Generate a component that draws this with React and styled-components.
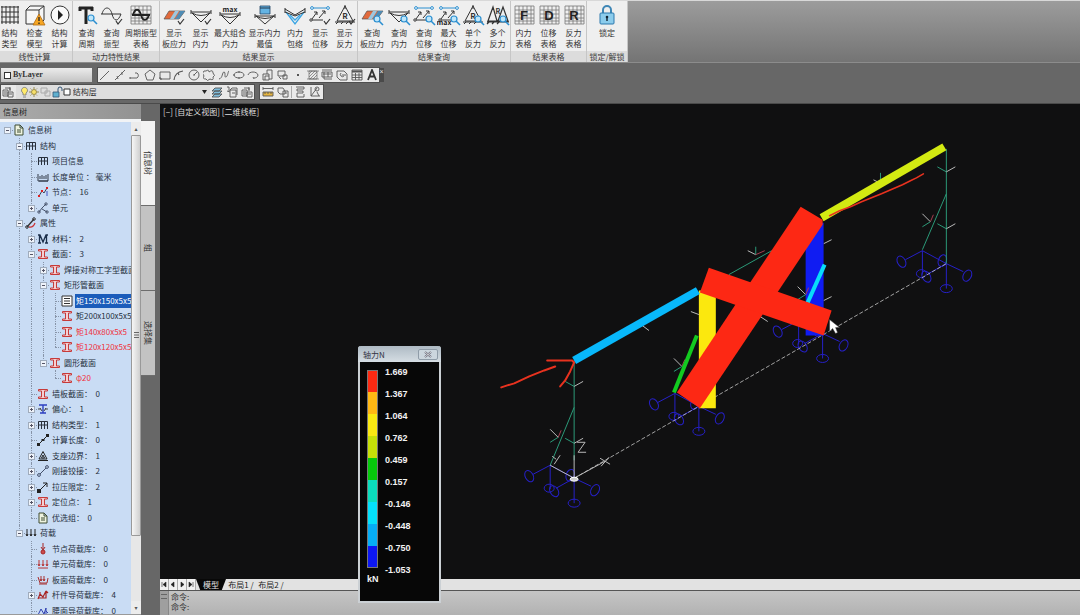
import React from "react";
import styled, { createGlobalStyle, css } from "styled-components";

const GlobalStyle = createGlobalStyle`
  * { box-sizing: border-box; }
  body {
    margin: 0;
    background: #676767;
    color: #333;
    font: 8px/11px "Noto Sans CJK SC", "Liberation Sans", sans-serif;
  }
  button, select { font: inherit; color: inherit; }
  svg { display: block; flex: none; }
`;

/* ---------- shell ---------- */

const Shell = styled.div`
  height: 100vh;
  display: flex;
  flex-direction: column;
  overflow: hidden;
  background: #676767;
`;

const Workspace = styled.main`
  flex: 1;
  min-height: 0;
  display: flex;
`;

/* ---------- ribbon ---------- */

const Ribbon = styled.header`
  flex: none;
  display: flex;
  height: 63px;
  overflow: hidden;
  border-top: 1px solid #d8d8d8;
  border-bottom: 1px solid #8c8c8c;
  background: linear-gradient(#9c9c9c, #747474);
`;

const RibbonGroups = styled.div`
  display: flex;
  margin-left: -3px;
  background: #efefef;
`;

const Group = styled.section`
  display: flex;
  flex-direction: column;
  width: ${(p) => p.$width}px;
  border-right: 1px solid #c6c6c6;
`;

const GroupButtons = styled.div`
  flex: 1;
  display: flex;
  justify-content: ${(p) => (p.$center ? "center" : "flex-start")};
  padding-top: 3px;
`;

const GroupTitle = styled.h2`
  margin: 0;
  height: 11px;
  background: #dcdcdc;
  color: #3a3a3a;
  font-size: 8px;
  font-weight: 400;
  line-height: 11px;
  text-align: center;
  white-space: nowrap;
`;

const RibbonButton = styled.button`
  display: flex;
  flex-direction: column;
  align-items: center;
  gap: 1px;
  flex: none;
  width: ${(p) => p.$width}px;
  padding: 0;
  border: 0;
  background: none;
  white-space: nowrap;
  line-height: 11px;
  text-align: center;
`;

const ButtonText = styled.span`
  display: block;
  line-height: 11px;
`;

const K = "#333";
const B = "#2b8fd0";

const Lens = ({ x = 17, y = 15 }) => (
  <g>
    <path d={`M${x + 2} ${y + 2}l4 4`} stroke={B} strokeWidth="1.6" />
    <circle cx={x} cy={y} r="3" fill="#bfe6fa" stroke={B} strokeWidth="1.2" />
  </g>
);
const Check = () => <path d="M16 17l2 3 4-5" stroke={K} strokeWidth="1.2" />;
const Plate = () => (
  <g>
    <path d="M7 7h16l-6 8H2z" fill="#e26a3c" stroke="#555" strokeWidth=".7" />
    <path d="M13 7h4l-5 8H8z" fill="#9cc7e0" />
    <path d="M18 7h5l-6 8h-4z" fill="#4e8cb5" />
  </g>
);
const Moment = () => (
  <path d="M2 8h20M2 6v4M22 6v4M3 9l9 9 9-9M3 9q9 5 18 0" stroke={K} />
);
const Shift = () => (
  <g>
    <path d="M5 4h14" stroke={B} />
    <circle cx="4" cy="4" r="1.4" fill="#fff" stroke={B} />
    <circle cx="20" cy="4" r="1.4" fill="#fff" stroke={B} />
    <path d="M4 15l5-7M11 14l6-7M6 8h3v3M14 7h3v3M3 16h12" stroke={K} />
    <circle cx="3" cy="16" r="1.2" fill="#fff" stroke={K} />
  </g>
);
const Support = () => (
  <g>
    <path d="M12 2L4 17h16zM12 5v-4M2 18h20M5 18l-2 2M10 18l-2 2M15 18l-2 2" stroke={K} />
    <text x="12" y="15" fontSize="8" fontWeight="700" textAnchor="middle" fill={K}>R</text>
  </g>
);
const LetterGrid = ({ letter }) => (
  <g>
    <path d="M3 2h19v18H3zM7 2v18M11 2v18M15 2v18M19 2v18M3 6h19M3 10h19M3 14h19M3 17h19" stroke="#777" strokeWidth=".8" />
    <text x="12" y="16" fontSize="13" fontWeight="700" textAnchor="middle" fill="#222" fontFamily="Liberation Sans">{letter}</text>
  </g>
);

const ribbonArt = {
  grid: <path d="M4 2v18M8 2v18M12 2v18M16 2v18M20 2v18M3 3h18M3 8h18M3 13h18M3 18h18" stroke={K} />,
  warn: (
    <g>
      <path d="M3 6l4-4h14v14l-4 4H3zM3 6h13v13M16 6l5-4" stroke={K} fill="#f6f6f6" />
      <path d="M16 10l6 11H10z" fill="#f6a623" stroke="#b06a10" strokeWidth=".8" />
      <path d="M16 13v4M16 18.500v1.500" stroke="#222" strokeWidth="1.3" />
    </g>
  ),
  play: (
    <g>
      <circle cx="12" cy="11" r="9" stroke={K} fill="#fafafa" />
      <path d="M10 6l5 5-5 5z" fill="#222" />
    </g>
  ),
  period: (
    <g>
      <path d="M4 4h14M11 4v16M5 3v4M17 3v4" stroke="#222" strokeWidth="3" />
      <Lens x={16} y={14} />
    </g>
  ),
  wave: (
    <g>
      <path d="M1 10h20M2 10c2-8 8-8 10 0s6 8 9 0" stroke={K} />
      <Check />
    </g>
  ),
  waveTable: (
    <g>
      <path d="M2 2h20v18H2zM6 2v18M10 2v18M14 2v18M18 2v18M2 6h20M2 10h20M2 14h20M2 17h20" stroke="#777" strokeWidth=".8" />
      <path d="M4 11c2-7 6-7 8 0s6 6 8 0M3 11h18" stroke="#222" strokeWidth="1.8" />
    </g>
  ),
  plateCheck: <g><Plate /><Check /></g>,
  momentCheck: <g><Moment /><Check /></g>,
  momentMax: (
    <g>
      <path d="M2 8v4M22 8v4M2 10h20M3 11l9 9 9-9M3 11q9 5 18 0" stroke={K} />
      <text x="12" y="8" fontSize="7" fontWeight="700" textAnchor="middle" fill="#222">max</text>
    </g>
  ),
  momentTop: (
    <g>
      <path d="M2 10v4M22 10v4M2 12h20M3 12l9 8 9-8M3 12q9 5 18 0" stroke={K} />
      <path d="M7 2h10v8H7z" fill="#64b4e4" stroke="#246" strokeWidth=".8" />
      <path d="M7 4h10" stroke="#234" />
    </g>
  ),
  envelope: (
    <g>
      <path d="M3 8l9 12 9-12M7 11l5 5 5-5" stroke="#3aa5e4" strokeWidth="1.3" />
      <path d="M2 4v5M22 4v5M2 5l10 6 10-6M2 8l10 4 10-4" stroke={K} />
    </g>
  ),
  shiftCheck: <g><Shift /><Check /></g>,
  supportCheck: <g><Support /><Check /></g>,
  plateFind: <g><Plate /><Lens /></g>,
  momentFind: <g><Moment /><Lens /></g>,
  shiftFind: <g><Shift /><Lens /></g>,
  shiftMax: (
    <g>
      <Shift />
      <text x="7" y="21" fontSize="7" fontWeight="700" textAnchor="middle" fill="#222">max</text>
      <Lens />
    </g>
  ),
  supportFind: <g><Support /><Lens /></g>,
  supportMany: (
    <g>
      <path d="M7 3L2 17h9zM17 3l-5 14h10zM1 18h22M3 18l-2 2M8 18l-2 2M13 18l-2 2" stroke={K} strokeWidth="1.2" />
      <text x="12" y="10" fontSize="7" fontWeight="700" textAnchor="middle" fill={K}>R</text>
      <Lens />
    </g>
  ),
  F: <LetterGrid letter="F" />,
  D: <LetterGrid letter="D" />,
  R: <LetterGrid letter="R" />,
  lock: (
    <g>
      <path d="M8 10V6a4 4 0 0 1 8 0v4" stroke="#3e86b5" strokeWidth="2" />
      <rect x="5" y="9" width="14" height="11" rx="1" fill="#8cccec" stroke="#2d78ad" />
      <path d="M12 13v4" stroke="#123" strokeWidth="1.4" />
      <circle cx="12" cy="13" r="1.300" fill="#123" />
    </g>
  ),
};

const groups = [
  { title: "线性计算", width: 76, items: [[25, "grid", "结构", "类型"], [25, "warn", "检查", "模型"], [25, "play", "结构", "计算"]] },
  { title: "动力特性结果", width: 87, items: [[27, "period", "查询", "周期"], [23, "wave", "查询", "振型"], [36, "waveTable", "周期振型", "表格"]] },
  {
    title: "结果显示", width: 198,
    items: [[28, "plateCheck", "显示", "板应力"], [25, "momentCheck", "显示", "内力"], [34, "momentMax", "最大组合", "内力"], [35, "momentTop", "显示内力", "最值"], [26, "envelope", "内力", "包络"], [24, "shiftCheck", "显示", "位移"], [25, "supportCheck", "显示", "反力"]],
  },
  {
    title: "结果查询", width: 153,
    items: [[28, "plateFind", "查询", "板应力"], [26, "momentFind", "查询", "内力"], [24, "shiftFind", "查询", "位移"], [25, "shiftMax", "最大", "位移"], [24, "supportFind", "单个", "反力"], [25, "supportMany", "多个", "反力"]],
  },
  { title: "结果表格", width: 76, items: [[25, "F", "内力", "表格"], [25, "D", "位移", "表格"], [25, "R", "反力", "表格"]] },
  { title: "锁定/解锁", width: 41, items: [[38, "lock", "锁定"]] },
];

/* ---------- tool bars ---------- */

const ToolArea = styled.div`
  flex: none;
  display: flex;
  flex-direction: column;
  gap: 3px;
  padding: 5px 0 4px 1px;
  border-bottom: 1px solid #4a4a4a;
`;

const ToolRow = styled.div`
  display: flex;
  gap: 6px;
  height: 14px;
`;

const ToolStrip = styled.div`
  display: flex;
  align-items: center;
  width: ${(p) => p.$width}px;
  height: 14px;
  background: #e9e9e9;
  box-shadow: 0 0 0 1px #4f4f4f;
`;

const ToolButton = styled.button`
  flex: 1;
  min-width: 0;
  display: flex;
  justify-content: center;
  padding: 0;
  border: 0;
  background: none;
`;

const StripClose = styled.button`
  flex: none;
  width: 5px;
  height: 14px;
  margin-left: -6px;
  padding: 0;
  border: 0;
  background: #4a4a4a;
  color: #e8e8e8;
  font: 7px/7px "Liberation Sans", sans-serif;
  display: flex;
  align-items: flex-start;
  justify-content: center;
`;

const Picker = styled.div`
  display: flex;
  align-items: center;
  gap: 2px;
  width: ${(p) => p.$width}px;
  padding: 0 3px;
  height: 14px;
  background: ${(p) => (p.$flat ? "#dedede" : "linear-gradient(#ececec, #c4c4c4)")};
`;

const PickerSelect = styled.select`
  flex: 1;
  min-width: 0;
  height: 14px;
  padding: 0;
  border: 0;
  background: none;
  appearance: none;
  line-height: 14px;
  ${(p) => p.$serif && css`font-family: "Liberation Serif", serif; font-weight: 700;`}
`;

const Swatch = styled.span`
  flex: none;
  width: 7px;
  height: 7px;
  border: 1px solid #333;
  background: #fff;
`;

const Separator = styled.span`
  width: 1px;
  height: 12px;
  background: #aaa;
`;

const Tool = ({ children }) => (
  <svg width="12" height="12" viewBox="0 0 12 12" fill="none" stroke="#555" strokeWidth=".9">{children}</svg>
);

const drawTools = [
  ["直线", <path d="M1 11L10 2" />],
  ["构造线", <path d="M1 11L11 1M3 7l1 3M8 3v3" />],
  ["多段线", <path d="M1 9h7a3 3 0 0 0 0-5H6M1 8v2" />],
  ["多边形", <path d="M6 1l5 4-2 6H3L1 5z" />],
  ["矩形", <path d="M1 3h10v7H1zM0 9h2v2" />],
  ["圆弧", <path d="M1 11q1-8 9-9M5 4l1 2" strokeWidth="1.2" />],
  ["圆", <g><circle cx="6" cy="6" r="5" /><path d="M6 6l3-3M5 6h2" /></g>],
  ["修订云线", <path d="M3 2q3-2 3 1 4-3 4 1 3 3 0 4 1 4-3 2-3 3-4 0-4 0-2-3-3-3 0-5z" />],
  ["样条曲线", <path d="M1 10c4-1 3-7 5-7s0 6 2 5 2-6 3-6" />],
  ["椭圆", <g><ellipse cx="6" cy="6" rx="5" ry="3" /><path d="M5 3h2M5 9h2M1 5v2" /></g>],
  ["椭圆弧", <path d="M1 6c1-4 9-4 10 0 0 2-2 3-4 3M6 8l1 2" />],
  ["插入块", <path d="M1 5h6v6H1zM5 5V1h5v9H7M3 11V7h4" />],
  ["创建块", <path d="M1 2h7v5H1zM6 6h4v4H6zM2 8l2 2" />],
  ["点", <circle cx="6" cy="6" r="1" fill="#222" stroke="none" />],
  ["图案填充", <path d="M2 2h8v8H2zM2 5l3-3M2 8l6-6M3 10l7-7M6 10l4-4M0 2h12M0 10h12" strokeWidth=".6" />],
  ["渐变色", <path d="M1 1h10M1 3h10v5H1zM3 10h8M2 5h8M3 3v7M7 3v5" />],
  ["面域", <path d="M1 2h7l3 3v6H4L1 8zM5 4a2 2 0 1 0 3 3M6 6h4" />],
  ["表格", <g><path d="M1 1h10v10H1zM1 6h10M1 8.500h10M4.500 4v7M8 4v7" /><path d="M1 2.500h10" strokeWidth="2" /></g>],
  ["文字", <path d="M2 11L6 1l4 10M3.500 7.500h5" stroke="#333" strokeWidth="1.800" />],
];

const LayersGlyph = () => (
  <Tool>
    <path d="M1 11l3-3h7l-3 3zM1 8l3-3h7l-3 3zM1 5l3-3h7l-3 3z" fill="#7fbddc" />
  </Tool>
);
const StackGlyph = () => (
  <Tool><path d="M1 4h5v6H1zM3 2h5v2M6 6h5v5H6zM7 8h3M2 6h3M2 8h3M8 1v4" /></Tool>
);
const SheetGlyph = () => (
  <Tool><path d="M4 4h6v7H4zM4 4l2-2h5v7M1 1h2v4M1 5l3 1M6 7h3" /></Tool>
);

/* ---------- information tree ---------- */

const Dock = styled.aside`
  flex: none;
  display: flex;
  flex-direction: column;
  width: 160px;
`;

const DockTitle = styled.h1`
  margin: 0 19px 0 0;
  flex: none;
  height: 15px;
  padding-left: 3px;
  background: linear-gradient(90deg, #ababab, #929292);
  color: #222;
  font-size: 8px;
  font-weight: 400;
  line-height: 15px;
`;

const DockBody = styled.div`
  flex: 1;
  min-height: 0;
  display: flex;
`;

const TreePane = styled.div`
  flex: none;
  display: flex;
  width: 141px;
  overflow: hidden;
  border-top: 3px solid #f1f3f5;
  border-bottom: 1px solid #999;
  background: #c9dcf4;
`;

const TreeList = styled.ul`
  flex: 1;
  min-width: 0;
  overflow: hidden;
  margin: 0;
  padding: 0 0 0 1px;
  list-style: none;
`;

const TreeRow = styled.li`
  display: flex;
  align-items: center;
  height: 16px;
  white-space: nowrap;
  &:nth-child(even) { height: 15px; }
`;

const dots = "1px dotted #8794a8";

const Guide = styled.span`
  position: relative;
  flex: none;
  width: 12px;
  height: 100%;
  &::before {
    content: "";
    position: absolute;
    left: 6px;
    top: 0;
    height: ${(p) => (p.$kind === "last" ? "50%" : "100%")};
    border-left: ${(p) => (p.$kind === "none" ? "0" : dots)};
  }
  &::after {
    content: "";
    position: absolute;
    left: 6px;
    right: 0;
    top: 50%;
    border-top: ${(p) => (p.$kind === "tee" || p.$kind === "last" || p.$branch ? dots : "0")};
  }
`;

const Expander = styled.button`
  position: absolute;
  z-index: 1;
  left: 3px;
  top: calc(50% - 3px);
  width: 7px;
  height: 7px;
  padding: 0;
  border: 1px solid #a0acbc;
  background: #eef3fa;
  &::before {
    content: "";
    position: absolute;
    left: 1px;
    top: 2px;
    width: 3px;
    height: 1px;
    background: #556;
  }
  &::after {
    content: "";
    position: absolute;
    left: 2px;
    top: 1px;
    width: 1px;
    height: ${(p) => (p.$open ? "0" : "3px")};
    background: #556;
  }
`;

const TreeLabel = styled.span`
  margin-left: 2px;
  padding: 0 1px;
  line-height: 14px;
  white-space: pre;
  color: ${(p) => (p.$tone === "red" ? "#f0333c" : p.$tone === "selected" ? "#fff" : "#26303e")};
  ${(p) => p.$tone === "selected" && css`flex: 1; background: #1b5cba;`}
`;

const treeArt = {
  doc: <path d="M2 1h5l3 3v7H2zM7 1v3h3M4 6h4M4 8h4" fill="#eef3df" stroke="#3f4c33" />,
  frame: <path d="M1.500 10V2.500h9V10M1 6h10M4.500 2v8M7.500 2v8" stroke="#28303c" />,
  unit: <path d="M1 3v7h10V3M3 8V5M5 8V4M7 8V5M9 8V4M2 10h9" stroke="#333a48" />,
  node: (
    <g>
      <path d="M2 10l3-5 2 2 3-5" stroke="#38435a" />
      <path d="M1 9h2v2H1zM9 1h2v2H9zM4 4h2v2H4z" fill="#e02020" />
      <path d="M10 5v5" stroke="#4255c4" />
    </g>
  ),
  elem: (
    <g stroke="#47536b">
      <path d="M2 10l3-4 4-4M5 7l5 3" />
      <circle cx="2" cy="10" r="1.200" /><circle cx="9" cy="2" r="1.200" /><circle cx="10" cy="10" r="1.200" />
    </g>
  ),
  prop: (
    <g>
      <path d="M2 10l7-8" stroke="#333" strokeWidth="1.300" />
      <path d="M4 10q4 1 6-4" stroke="#c33" strokeWidth="1.300" />
      <circle cx="2" cy="10" r="1.300" stroke="#333" /><circle cx="9" cy="2" r="1.300" stroke="#333" />
    </g>
  ),
  material: <path d="M1 10h3M8 10h3M1 2h2l3 7 3-7h2M2.500 2v8M9.500 2v8" stroke="#1c2f4b" strokeWidth="1.300" />,
  section: <path d="M1.500 1.500h9v1.500h-3v6h3v1.500h-9V9h3V3h-3z" fill="#f4cfd2" stroke="#c63a3a" />,
  list: <path d="M1 1h10v10H1zM3 3.500h6M3 6h6M3 8.500h6" fill="#fff" stroke="#333" />,
  offset: (
    <g>
      <path d="M2 2h8M3 10h6M6 2v8" stroke="#2d3fc0" strokeWidth="1.400" />
      <path d="M1 6h3M8 6h3M3 5l2 3M9 5L7 8" stroke="#444" />
    </g>
  ),
  length: (
    <g>
      <path d="M2 10l8-8" stroke="#222" />
      <path d="M0 9h3v3H0zM9 0h3v3H9zM4.500 5h3v2h-3z" fill="#222" />
    </g>
  ),
  triangle: <path d="M6 1.500L2 9h8zM6 5L4.500 8h3zM1 10.500h10" stroke="#222" />,
  hinge: (
    <g stroke="#44506a">
      <path d="M3 9l6-6" /><circle cx="2" cy="10" r="1.400" /><circle cx="10" cy="2" r="1.400" />
    </g>
  ),
  limit: (
    <g>
      <path d="M2 10l8-8M6 2h4v4" stroke="#222" />
      <path d="M0 8h4v4H0z" fill="#222" />
    </g>
  ),
  load: <path d="M2 2v7M6 2v7M10 2v7M1 7l1 2 1-2M5 7l1 2 1-2M9 7l1 2 1-2" stroke="#222" />,
  nodeLoad: <g stroke="#a62525"><path d="M6 0v6M4 4l2 3 2-3" /><circle cx="6" cy="9" r="2" fill="#cc4b4b" /></g>,
  elemLoad: <path d="M1 10h10M2 2v6M6 2v6M10 2v6M1 6l1 2 1-2M5 6l1 2 1-2M9 6l1 2 1-2" stroke="#b83333" />,
  plateLoad: <path d="M1 3l2 6h7l1-5M4 2v5M7 2v5M3 5l1 2 1-2M6 5l1 2 1-2M2 10h8" stroke="#a83030" />,
  barLoad: <path d="M1 10l2-5 3 3 3-6v7H2M9 2l2 2M3 5V3" stroke="#a82424" strokeWidth="1.200" />,
  faceLoad: <path d="M1 10l3-6 3 5 2-6v7M9 6l2 2" stroke="#3140b0" />,
};

const rows = [
  [0, "doc", "信息树", "-"],
  [1, "frame", "结构", "-"],
  [2, "frame", "项目信息"],
  [2, "unit", "长度单位 ： 毫米"],
  [2, "node", "节点：  16"],
  [2, "elem", "单元", "+"],
  [1, "prop", "属性", "-"],
  [2, "material", "材料：  2", "+"],
  [2, "section", "截面：  3", "-"],
  [3, "section", "焊接对称工字型截面", "+"],
  [3, "section", "矩形管截面", "-"],
  [4, "list", "矩150x150x5x5", "", "selected"],
  [4, "section", "矩200x100x5x5"],
  [4, "section", "矩140x80x5x5", "", "red"],
  [4, "section", "矩120x120x5x5", "", "red"],
  [3, "section", "圆形截面", "-"],
  [4, "section", "φ20", "", "red"],
  [2, "section", "墙板截面：  0"],
  [2, "offset", "偏心：  1", "+"],
  [2, "frame", "结构类型：  1", "+"],
  [2, "length", "计算长度：  0"],
  [2, "triangle", "支座边界：  1", "+"],
  [2, "hinge", "刚接铰接：  2", "+"],
  [2, "limit", "拉压限定：  2", "+"],
  [2, "section", "定位点：  1", "+"],
  [2, "doc", "优选组：  0"],
  [1, "load", "荷载", "-"],
  [2, "nodeLoad", "节点荷载库：  0"],
  [2, "elemLoad", "单元荷载库：  0"],
  [2, "plateLoad", "板面荷载库：  0"],
  [2, "barLoad", "杆件导荷载库：  4", "+"],
  [2, "faceLoad", "腰面导荷载库：  0"],
];

function continues(index, level) {
  for (let i = index + 1; i < rows.length; i += 1) {
    if (rows[i][0] === level) return true;
    if (rows[i][0] < level) return false;
  }
  return level === 2;
}

function guideKind(index, column) {
  const level = rows[index][0];
  if (column === 0) return "none";
  const more = continues(index, column);
  if (column === level) return more ? "tee" : "last";
  return more ? "through" : "none";
}

const ScrollTrack = styled.div`
  flex: none;
  display: flex;
  flex-direction: column;
  width: 10px;
  background: #e7e7e7;
`;

const ScrollArrow = styled.button`
  flex: none;
  height: 13px;
  padding: 0;
  border: 0;
  background: #ececec;
  color: #555;
  font: 6px/13px "DejaVu Sans", sans-serif;
`;

const ScrollThumb = styled.div`
  flex: 402;
  display: flex;
  align-items: center;
  justify-content: center;
  border: 1px solid #999;
  border-radius: 1px;
  background: linear-gradient(90deg, #f6f6f6, #cfcfcf);
`;

const ScrollRest = styled.div`
  flex: 66;
`;

const SideTabs = styled.nav`
  display: flex;
  flex-direction: column;
  width: 14px;
  padding-top: 2px;
`;

const SideTab = styled.button`
  height: 85px;
  padding: 0;
  border: 0;
  border-bottom: 1px solid #6d6d6d;
  background: ${(p) => (p.$active ? "#f3f3f3" : "#c3c3c3")};
  color: #333;
  writing-mode: vertical-rl;
  text-orientation: sideways;
  text-align: center;
  line-height: 14px;
`;

/* ---------- drawing area ---------- */

const Stage = styled.section`
  position: relative;
  flex: 1;
  min-width: 0;
  display: flex;
  flex-direction: column;
`;

const Canvas = styled.div`
  flex: 1;
  min-height: 0;
  display: grid;
  background: #101011;
  > * { grid-area: 1 / 1; }
  > svg { width: 100%; height: 100%; min-height: 0; }
`;

const ViewName = styled.div`
  padding: 2px 3px;
  color: #dedede;
`;

const SheetTabs = styled.nav`
  flex: none;
  display: flex;
  align-items: center;
  height: 12px;
  border-bottom: 1px solid #555;
  background: #e2e2e2;
  color: #222;
`;

const SheetArrow = styled.button`
  display: flex;
  justify-content: center;
  align-items: center;
  width: 9px;
  height: 11px;
  padding: 0;
  border: 0;
  border-right: 1px solid #aaa;
  background: #f1f1f1;
`;

const SheetTab = styled.button`
  height: 11px;
  width: 30px;
  padding: 0;
  border: 0;
  line-height: 11px;
  background: ${(p) => (p.$active ? "#080808" : "transparent")};
  color: ${(p) => (p.$active ? "#e5e5e5" : "#222")};
  clip-path: ${(p) => (p.$active ? "polygon(0 0, 100% 0, 86% 100%, 14% 100%)" : "none")};
`;

const CommandLine = styled.div`
  flex: none;
  display: flex;
  height: 24px;
  background: linear-gradient(#c5c5c5, #b2b2b2);
  color: #333;
  line-height: 10px;
`;

const CommandGrip = styled.div`
  width: 9px;
  margin-right: 2px;
  background: #9f9f9f;
  border-right: 1px solid #888;
  &::before {
    content: "";
    display: block;
    height: 3px;
    margin: 3px 1px 0;
    border-top: 1px solid #666;
    border-bottom: 1px solid #666;
  }
`;

const CommandText = styled.div`
  padding-top: 1px;
  white-space: pre;
`;

const Legend = styled.section`
  position: absolute;
  left: 198px;
  top: 242px;
  width: 83px;
  height: 257px;
  display: flex;
  flex-direction: column;
  border: 2px solid #cbd0d4;
  border-top: 0;
  border-radius: 3px 3px 0 0;
  background: #070707;
`;

const LegendBar = styled.header`
  display: flex;
  align-items: center;
  justify-content: space-between;
  height: 16px;
  margin: 0 -2px;
  padding: 0 3px 0 5px;
  border-radius: 3px 3px 0 0;
  background: linear-gradient(#aebac4, #d5dde3);
  color: #334;
`;

const LegendClose = styled.button`
  display: flex;
  align-items: center;
  justify-content: center;
  width: 20px;
  height: 11px;
  padding: 0;
  border: 1px solid #8f9ca8;
  border-radius: 2px;
  background: #ccd6de;
`;

const LegendBody = styled.div`
  display: flex;
  align-items: flex-start;
  gap: 7px;
  padding: 8px 0 0 7px;
`;

const Scale = styled.div`
  width: 11px;
  border: 1px solid #777;
`;

const Band = styled.div`
  height: 22px;
  background: ${(p) => p.$color};
  &:first-child, &:last-child { height: 21px; }
`;

const Values = styled.ol`
  margin: -9px 0 0;
  padding: 0;
  list-style: none;
  color: #f2f2f2;
  font: 700 9px/22px "Liberation Sans", sans-serif;
`;

const Unit = styled.div`
  padding: 0 7px;
  margin-top: -8px;
  color: #f2f2f2;
  font: 700 9px/12px "Liberation Sans", sans-serif;
`;

const bands = ["#fb2a12", "#ffb814", "#f9e812", "#c6e008", "#06c90c", "#0bdcbc", "#04e0fb", "#06adf5", "#0d17f2"];
const values = ["1.669", "1.367", "1.064", "0.762", "0.459", "0.157", "-0.146", "-0.448", "-0.750", "-1.053"];

const BLUE = "#2620c8";
const TEAL = "#2b9a78";
const GREY = "#b9b9b9";

/* Pinned base: two legs, a stem and their restraint rings, plus the same at the back foot. */
const Foot = ({ x, y }) => (
  <g transform={`translate(${x} ${y})`} stroke={BLUE}>
    <path d="M-24 -13L0 0L17 8M0 0V25M0 0L-18 10M-24 -13V11M-24 -13L-41 -4" />
    <ellipse cx="0" cy="25" rx="6" ry="4" />
    <ellipse cx="21" cy="12" rx="4" ry="6" transform="rotate(28 21 12)" />
    <ellipse cx="-20" cy="13" rx="4" ry="6" transform="rotate(-32 -20 13)" />
    <ellipse cx="-25" cy="10" rx="5" ry="4" />
    <ellipse cx="-45" cy="-2" rx="4" ry="6" transform="rotate(-28 -45 -2)" />
    <ellipse cx="-4" cy="-3" rx="4" ry="6" transform="rotate(20 -4 -3)" />
  </g>
);

const Tick = ({ x, y }) => (
  <g>
    <path d={`M${x - 9} ${y - 5}L${x} ${y}`} stroke={TEAL} />
    <path d={`M${x} ${y}l9 -5`} stroke={GREY} />
  </g>
);

const BraceTick = ({ x, y }) => (
  <g>
    <path d={`M${x - 8} ${y - 8}L${x} ${y}`} stroke={GREY} />
    <path d={`M${x} ${y}l3 -7`} stroke="#a53d50" />
    <path d={`M${x} ${y}l-8 5`} stroke={TEAL} />
  </g>
);

const Model = () => (
  <svg viewBox="160 103 920 476" preserveAspectRatio="xMinYMin meet" fill="none" strokeWidth="1" role="img" aria-label="轴力N">
    <Foot x={575} y={478} />
    <Foot x={700} y={406} />
    <Foot x={824} y={333} />
    <Foot x={948} y={263} />
    <path d="M575 478L948 263" stroke="#c8c8c8" strokeDasharray="4 2" strokeWidth=".8" />
    <g stroke={TEAL}>
      <path d="M575 360V460M575 407L551 465M948 148V263M948 193L924 249M730 274L773 250" />
    </g>
    <g stroke={GREY}>
      <path d="M575 455V478L606 461M551 465L575 478" />
      <path d="M578 442H586L579 452H587M553 456L557 459M561 455L555 464M601 458L611 464M610 457L602 466" />
      <path d="M642 324L650 330M692 311L700 314M760 315L769 321M749 250L757 254M875 179L881 182M825 243L833 239M825 300L833 296" />
    </g>
    <path d="M757 254V246M882 181V172" stroke={TEAL} />
    <path d="M757 254L766 250" stroke="#a53d50" />
    <ellipse cx="575" cy="479" rx="4" ry="2" stroke="#fff" fill="#ccc" />
    <Tick x={575} y={386} />
    <Tick x={575} y={443} />
    <Tick x={948} y={171} />
    <Tick x={948} y={228} />
    <BraceTick x={559} y={437} />
    <BraceTick x={683} y={366} />
    <BraceTick x={932} y={221} />
    <path d="M700 290H717V408H700z" fill="#fbe80e" />
    <path d="M807 222H825V335H807z" fill="#101cf2" />
    <BraceTick x={807} y={294} />
    <path d="M575 360L699 290" stroke="#08b8fb" strokeWidth="8" />
    <path d="M823 217L946 146" stroke="#d3ea12" strokeWidth="8" />
    <path d="M675 392L698 335" stroke="#13cb20" strokeWidth="4" />
    <path d="M809 302L826 264" stroke="#08dcfa" strokeWidth="4" />
    <path d="M802 206L824 219V224L701 408L678 392z" fill="#fd2814" />
    <path d="M710 267L833 310L825 335L701 292z" fill="#fd2814" />
    <g stroke="#e8321f" strokeWidth="2" strokeLinecap="round" strokeLinejoin="round">
      <path d="M502 387L508 385L515 383L530 376L545 370L556 366" />
      <path d="M548 360L573 360L575 362L571 371L566 380L561 386" />
      <path d="M831 215L841 210L852 206L863 201L883 193L904 184L912 180L918 177L925 173" strokeWidth="1.600" />
    </g>
    <path d="M831 319V331L834 328L837 333L839 332L837 327H841z" fill="#fff" stroke="#333" strokeWidth=".5" />
  </svg>
);

const arrows = [
  ["第一个", "M1 1v5M5 1v5L2 3.500z"],
  ["上一个", "M4 1v5L1 3.500z"],
  ["下一个", "M2 1v5L5 3.500z"],
  ["最后一个", "M5 1v5M1 1v5L4 3.500z"],
];

export default function App() {
  return (
    <Shell>
      <GlobalStyle />
      <Ribbon>
        <RibbonGroups>
          {groups.map((group) => (
            <Group key={group.title} $width={group.width}>
              <GroupButtons $center={group.items.length === 1}>
                {group.items.map(([width, icon, first, second]) => (
                  <RibbonButton key={icon} $width={width}>
                    <svg width="24" height="22" viewBox="0 0 24 22" fill="none">{ribbonArt[icon]}</svg>
                    <span>
                      <ButtonText>{first}</ButtonText>
                      {second && <ButtonText>{second}</ButtonText>}
                    </span>
                  </RibbonButton>
                ))}
              </GroupButtons>
              <GroupTitle>{group.title}</GroupTitle>
            </Group>
          ))}
        </RibbonGroups>
      </Ribbon>

      <ToolArea>
        <ToolRow>
          <Picker $width={91}>
            <Swatch />
            <PickerSelect $serif aria-label="颜色"><option>ByLayer</option></PickerSelect>
          </Picker>
          <ToolStrip $width={281}>
            {drawTools.map(([name, art]) => (
              <ToolButton key={name} aria-label={name}><Tool>{art}</Tool></ToolButton>
            ))}
          </ToolStrip>
          <StripClose aria-label="关闭">×</StripClose>
        </ToolRow>
        <ToolRow>
          <ToolStrip $width={253}>
            <ToolButton aria-label="图层特性"><StackGlyph /></ToolButton>
            <Picker $width={194} $flat>
              <svg width="52" height="12" viewBox="0 0 52 12" fill="none">
                <path d="M4 9V7a3 3 0 1 1 3 0v2zM4 11h3" fill="#ffeb6b" stroke="#777" strokeWidth=".8" />
                <circle cx="15" cy="6" r="2.500" fill="#f7e06c" stroke="#8a7a30" strokeWidth=".8" />
                <path d="M15 1v2M15 9v2M10 6h2M18 6h2M11.500 2.500l1 1M18 2.500l-1 1M11.500 9.500l1-1M18 9.500l-1-1" stroke="#8a7a30" strokeWidth=".8" />
                <path d="M22 2h6v5h-6zM26 5h5v5h-5z" stroke="#aaa" />
                <path d="M34 6h6v5h-6z" fill="#5fb0cf" stroke="#357" strokeWidth=".8" />
                <path d="M39 6V3a2 2 0 0 1 4 0v2" stroke="#357" />
                <path d="M45 3h6v6h-6z" fill="#fff" stroke="#333" />
              </svg>
              <PickerSelect aria-label="图层"><option>结构层</option></PickerSelect>
              <svg width="5" height="4" viewBox="0 0 5 4"><path d="M0 0h5L2.500 4z" fill="#222" /></svg>
            </Picker>
            <ToolButton aria-label="图层置为当前"><LayersGlyph /></ToolButton>
            <ToolButton aria-label="上一个图层"><SheetGlyph /></ToolButton>
            <ToolButton aria-label="图层状态"><StackGlyph /></ToolButton>
          </ToolStrip>
          <ToolStrip $width={63}>
            <ToolButton aria-label="距离">
              <Tool><path d="M1 6h10v4H1z" fill="#e5b43e" /><path d="M1 1v3M11 1v3M1 2.500h10M3 8V6M6 8V6M9 8V6" /></Tool>
            </ToolButton>
            <ToolButton aria-label="面域质量">
              <Tool><path d="M1 2h5l2 3v3H3L1 6zM6 5h5v6H6zM8 7h2" /></Tool>
            </ToolButton>
            <Separator />
            <ToolButton aria-label="列表">
              <Tool><path d="M2 1h8v2H3v2h6v2H3v4h7V8" /></Tool>
            </ToolButton>
            <ToolButton aria-label="定位点">
              <Tool><path d="M2 1v9h9M2 10l6-8M8 6l2 4" /><circle cx="8" cy="3" r="2" /></Tool>
            </ToolButton>
          </ToolStrip>
        </ToolRow>
      </ToolArea>

      <Workspace>
        <Dock>
          <DockTitle>信息树</DockTitle>
          <DockBody>
            <TreePane>
              <TreeList>
                {rows.map(([level, icon, label, state, tone], index) => (
                  <TreeRow key={index}>
                    {Array.from({ length: level + 1 }, (_, column) => (
                      <Guide key={column} $kind={guideKind(index, column)} $branch={column === level}>
                        {column === level && state && (
                          <Expander $open={state === "-"} aria-label={label} aria-expanded={state === "-"} />
                        )}
                      </Guide>
                    ))}
                    <svg width="12" height="12" viewBox="0 0 12 12" fill="none">{treeArt[icon]}</svg>
                    <TreeLabel $tone={tone}>{label}</TreeLabel>
                  </TreeRow>
                ))}
              </TreeList>
              <ScrollTrack>
                <ScrollArrow aria-label="向上">▴</ScrollArrow>
                <ScrollThumb>
                  <svg width="5" height="6" viewBox="0 0 5 6"><path d="M0 .5h5M0 3h5M0 5.500h5" stroke="#666" /></svg>
                </ScrollThumb>
                <ScrollRest />
                <ScrollArrow aria-label="向下">▾</ScrollArrow>
              </ScrollTrack>
            </TreePane>
            <SideTabs>
              <SideTab $active>信息树</SideTab>
              <SideTab>组</SideTab>
              <SideTab>选择集</SideTab>
            </SideTabs>
          </DockBody>
        </Dock>

        <Stage>
          <Canvas>
            <Model />
            <ViewName>[−] [自定义视图] [二维线框]</ViewName>
          </Canvas>
          <SheetTabs>
            {arrows.map(([name, d]) => (
              <SheetArrow key={name} aria-label={name}>
                <svg width="6" height="7" viewBox="0 0 6 7"><path d={d} fill="#222" stroke="#222" strokeWidth=".6" /></svg>
              </SheetArrow>
            ))}
            <SheetTab $active>模型</SheetTab>
            <SheetTab>布局1 /</SheetTab>
            <SheetTab>布局2 /</SheetTab>
          </SheetTabs>
          <CommandLine>
            <CommandGrip />
            <CommandText>{"命令:\n命令:"}</CommandText>
          </CommandLine>
          <Legend>
            <LegendBar>
              轴力N
              <LegendClose aria-label="关闭">
                <svg width="8" height="7" viewBox="0 0 8 7"><path d="M1 1l6 5M7 1L1 6" stroke="#667" strokeWidth="2" /><path d="M1 1l6 5M7 1L1 6" stroke="#eee" strokeWidth=".8" /></svg>
              </LegendClose>
            </LegendBar>
            <LegendBody>
              <Scale>{bands.map((color) => <Band key={color} $color={color} />)}</Scale>
              <Values>{values.map((value) => <li key={value}>{value}</li>)}</Values>
            </LegendBody>
            <Unit>kN</Unit>
          </Legend>
        </Stage>
      </Workspace>
    </Shell>
  );
}
